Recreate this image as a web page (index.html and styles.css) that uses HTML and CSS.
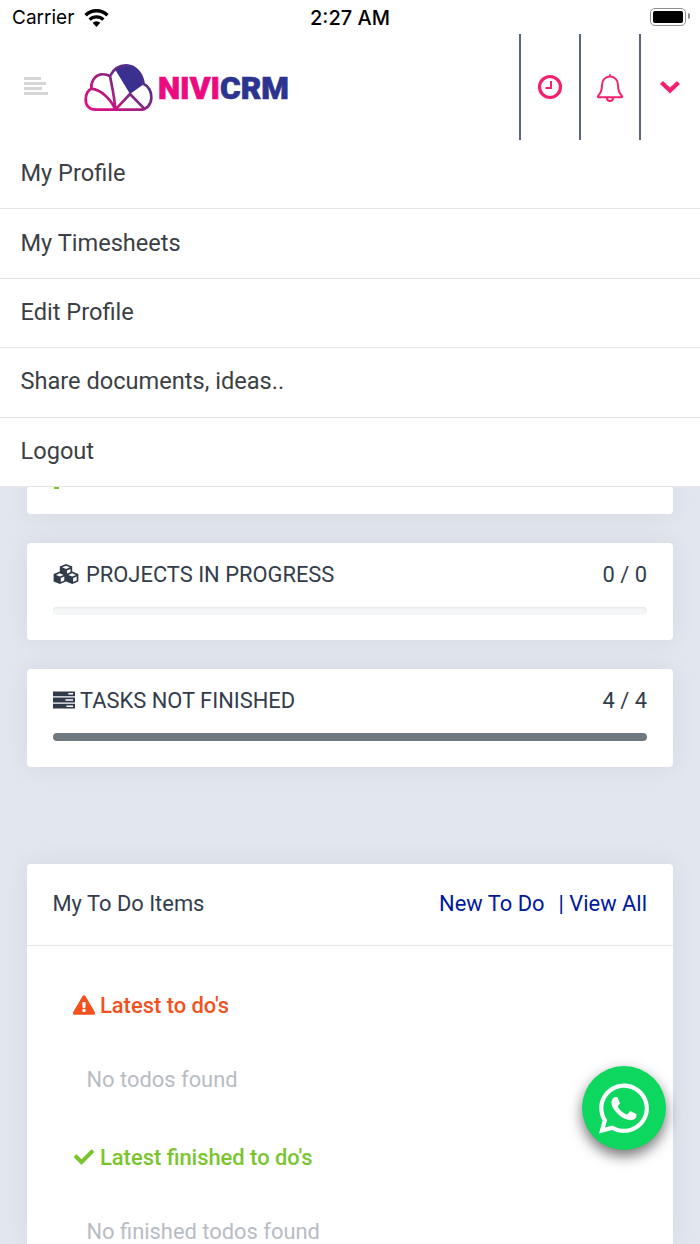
FILE: index.html
```html
<!DOCTYPE html>
<html lang="en">
<head>
  <meta charset="UTF-8" />
  <meta name="viewport" content="width=device-width, initial-scale=1.0"/>
  <title>NiviCRM Dashboard</title>
  <link rel="stylesheet" href="styles.css">
</head>
<body>
  <div class="status-bar">
    <div class="status-left">
      <span>Carrier</span>
      <svg class="wifi" viewBox="0 0 24 18" width="25" height="19" fill="none" stroke="#000">
        <path d="M1.500 6.800a15 15 0 0 1 21 0" stroke-width="3.200"/>
        <path d="M5.400 11a9.500 9.500 0 0 1 13.200 0" stroke-width="3.200"/>
        <path d="M12 18 8.300 14.100a5.300 5.300 0 0 1 7.400 0z" fill="#000" stroke="none"/>
      </svg>
    </div>
    <div class="status-time">2:27 AM</div>
    <div class="status-right">
      <div class="battery"><div class="battery-fill"></div></div>
    </div>
  </div>

  <header class="top-bar">
    <div class="burger"><span></span><span></span><span></span><span></span></div>
    <div class="logo">
      <svg viewBox="0 0 240 168" width="80" height="56">
        <defs>
          <linearGradient id="cloudGrad" x1="0" y1="1" x2="1" y2="0.2">
            <stop offset="0" stop-color="#ec0a80"/>
            <stop offset="0.5" stop-color="#a3207f"/>
            <stop offset="1" stop-color="#2c348f"/>
          </linearGradient>
        </defs>
        <path d="M105 28C118 18 135 14 150 19C172 26 186 46 192 72L150 102Z" fill="#39308f"/>
        <path d="M47 149C27 149 16 135 17 117C18 102 23 91 34 86C32 66 44 46 63 43C72 42 82 44 90 48C100 28 118 16 138 16C167 16 187 42 191 72C206 78 215 96 214 114C213 135 200 149 180 149Z" fill="none" stroke="url(#cloudGrad)" stroke-width="8"/>
        <path d="M34 86C63 90 92 115 106 149M90 48C96 80 104 115 106 149M106 149 150 102 192 145" fill="none" stroke="url(#cloudGrad)" stroke-width="8"/>
      </svg>
      <span class="logo-text"><span class="logo-pink">NIVI</span><span class="logo-blue">CRM</span></span>
    </div>
    <div class="top-actions">
      <div class="action-cell">
        <svg viewBox="0 0 26 26" width="26" height="26" fill="none" stroke="#f5206f">
          <circle cx="13" cy="13" r="10.500" stroke-width="3.200"/>
          <path d="M14 7v7H8.500" stroke-width="2"/>
        </svg>
      </div>
      <div class="action-cell">
        <svg viewBox="0 0 28 30" width="28" height="30" fill="none" stroke="#f5206f" stroke-width="2">
          <path d="M2 24c3-3 4-6 4-11 0-5 3.500-8.500 8-8.500s8 3.500 8 8.500c0 5 1 8 4 11 .5.700 0 1.200-.6 1.200H2.600C2 25.200 1.500 24.700 2 24z"/>
          <path d="M11 26c0 2 1.400 3 3 3s3-1 3-3"/>
          <circle cx="14" cy="3" r="1" fill="#f5206f" stroke="none"/>
        </svg>
      </div>
      <div class="action-cell">
        <svg viewBox="0 0 22 16" width="22" height="16" fill="none" stroke="#f5206f" stroke-width="4.400">
          <path d="M2.500 3.500 11 11.500l8.500-8"/>
        </svg>
      </div>
    </div>
  </header>

  <nav class="user-menu">
    <a href="#">My Profile</a>
    <a href="#">My Timesheets</a>
    <a href="#">Edit Profile</a>
    <a href="#">Share documents, ideas..</a>
    <a href="#">Logout</a>
  </nav>

  <main class="dashboard">
    <section class="card card-cut"><span class="green-tip"></span></section>

    <section class="card stat-card">
      <div class="stat-row">
        <div class="stat-title">
          <svg class="cubes" viewBox="0 0 27 21" width="26" height="20">
            <defs>
              <g id="cube">
                <path fill="#2f3a4a" d="M7 0l6.500 2.600v7.800L7 13 .5 10.400V2.600z"/>
                <path fill="#fff" d="M7 1.800l4 1.700-4 1.700-4-1.700zM8 6.700l3.700-1.500v4.100L8 10.800z"/>
              </g>
            </defs>
            <use href="#cube" x="6.500" y="0"/>
            <use href="#cube" x="0" y="8"/>
            <use href="#cube" x="13" y="8"/>
          </svg>
          <span>PROJECTS IN PROGRESS</span>
        </div>
        <span class="stat-count">0 / 0</span>
      </div>
      <div class="progress"></div>
    </section>

    <section class="card stat-card">
      <div class="stat-row">
        <div class="stat-title">
          <svg class="tasks-icon" viewBox="0 0 23 18" width="22" height="18">
            <path fill="#2f3a4a" d="M0 0h23v5H0zM0 6.500h23v5H0zM0 13h23v5H0z"/>
            <path fill="#fff" d="M16 1.800h5v1.400h-5zM13 8.300h8v1.400h-8zM14 14.800h7v1.400h-7z"/>
          </svg>
          <span>TASKS NOT FINISHED</span>
        </div>
        <span class="stat-count">4 / 4</span>
      </div>
      <div class="progress progress-full"></div>
    </section>

    <section class="card todo-card">
      <div class="todo-head">
        <span class="todo-name">My To Do Items</span>
        <div class="todo-links">
          <a href="#">New To Do</a>
          <a href="#">| View All</a>
        </div>
      </div>
      <div class="todo-body">
        <h4 class="todo-title todo-late">
          <svg viewBox="0 0 576 512" width="22" height="20"><path fill="#f4511e" d="M569.517 440.013C587.975 472.007 564.806 512 527.94 512H48.054c-36.937 0-59.999-40.055-41.577-71.987L246.423 23.985c18.467-32.009 64.72-31.951 83.154 0l239.94 416.028zM288 354c-25.405 0-46 20.595-46 46s20.595 46 46 46 46-20.595 46-46-20.595-46-46-46zm-43.673-165.346l7.418 136c.347 6.364 5.609 11.346 11.982 11.346h48.546c6.373 0 11.635-4.982 11.982-11.346l7.418-136c.375-6.874-5.098-12.654-11.982-12.654h-63.383c-6.884 0-12.356 5.78-11.981 12.654z"/></svg>
          Latest to do's
        </h4>
        <p class="todo-empty">No todos found</p>
        <h4 class="todo-title todo-done">
          <svg viewBox="0 0 512 512" width="22" height="20"><path fill="#7ac52e" d="M173.898 439.404l-166.4-166.4c-9.997-9.997-9.997-26.206 0-36.204l36.203-36.204c9.997-9.998 26.207-9.998 36.204 0L192 312.69 432.095 72.596c9.997-9.997 26.207-9.997 36.204 0l36.203 36.204c9.997 9.997 9.997 26.206 0 36.204l-294.4 294.401c-9.998 9.997-26.207 9.997-36.204-.001z"/></svg>
          Latest finished to do's
        </h4>
        <p class="todo-empty">No finished todos found</p>
      </div>
    </section>
  </main>

  <a class="whatsapp" href="#">
    <svg viewBox="0 0 448 512" width="50" height="57"><path fill="#fff" d="M380.9 97.1C339 55.1 283.2 32 223.9 32c-122.4 0-222 99.6-222 222 0 39.1 10.2 77.3 29.6 111L0 480l117.7-30.9c32.4 17.7 68.9 27 106.1 27h.1c122.3 0 224.1-99.6 224.1-222 0-59.3-25.2-115-67.1-157zm-157 341.6c-33.2 0-65.7-8.9-94-25.7l-6.7-4-69.8 18.3L72 359.2l-4.4-7c-18.5-29.4-28.2-63.3-28.2-98.2 0-101.7 82.8-184.5 184.6-184.5 49.3 0 95.6 19.2 130.4 54.1 34.8 34.9 56.2 81.2 56.1 130.5 0 101.8-84.9 184.6-186.6 184.6zm101.2-138.2c-5.5-2.8-32.8-16.2-37.9-18-5.1-1.9-8.8-2.8-12.5 2.8-3.7 5.6-14.3 18-17.6 21.8-3.2 3.7-6.5 4.2-12 1.4-32.6-16.3-54-29.1-75.5-66-5.7-9.8 5.7-9.1 16.3-30.3 1.8-3.7.9-6.9-.5-9.7-1.4-2.8-12.5-30.1-17.1-41.2-4.5-10.8-9.1-9.3-12.5-9.5-3.2-.2-6.9-.2-10.6-.2-3.7 0-9.7 1.4-14.8 6.9-5.1 5.6-19.4 19-19.4 46.3 0 27.3 19.9 53.7 22.6 57.4 2.8 3.7 39.1 59.7 94.8 83.8 35.2 15.2 49 16.5 66.6 13.9 10.7-1.6 32.8-13.4 37.4-26.4 4.6-13 4.6-24.1 3.2-26.4-1.3-2.5-5-3.9-10.5-6.6z"/></svg>
  </a>
</body>
</html>
```

FILE: styles.css
```css
html, body {
  height: 1244px;
  overflow: hidden;
}

body {
  position: relative;
  margin: 0;
  font-family: 'Roboto', 'Liberation Sans', sans-serif;
  background: #e1e6ef;
  color: #2f3a4a;
}

/* status bar */
.status-bar {
  display: flex;
  align-items: center;
  height: 34px;
  padding: 1px 10px 0 12px;
  background: #ffffff;
  color: #000000;
  font-family: 'Inter', 'Liberation Sans', sans-serif;
  box-sizing: border-box;
}

.status-left {
  display: flex;
  flex: 1;
  align-items: center;
  gap: 10px;
  font-size: 19px;
}

.status-time {
  font-size: 20px;
  font-weight: 500;
  margin-left: 2px;
}

.status-right {
  display: flex;
  flex: 1;
  justify-content: flex-end;
  padding-right: 4px;
}

.battery {
  position: relative;
  width: 36px;
  height: 18px;
  padding: 2px;
  border: 1.5px solid #8e8e8e;
  border-radius: 5px;
  box-sizing: border-box;
  margin-top: -1px;
}

.battery::after {
  content: "";
  position: absolute;
  top: 4px;
  right: -5px;
  width: 2px;
  height: 6px;
  background: #8e8e8e;
  border-radius: 0 2px 2px 0;
}

.battery-fill {
  height: 100%;
  background: #000000;
  border-radius: 2px;
}

/* header */
.top-bar {
  display: flex;
  align-items: center;
  height: 106px;
  background: #ffffff;
  padding-left: 24px;
}

.burger {
  display: flex;
  flex-direction: column;
  gap: 2px;
  width: 24px;
  margin-top: -3px;
}

.burger span {
  display: block;
  height: 3px;
  background: #d6d6d6;
}

.burger span:nth-child(1) { width: 17px; }
.burger span:nth-child(2) { width: 22px; }
.burger span:nth-child(3) { width: 18px; }
.burger span:nth-child(4) { width: 24px; }

.logo {
  display: flex;
  align-items: center;
  margin-left: 32px;
  margin-top: 2px;
}

.logo-text {
  margin-left: -2px;
  font-size: 31.5px;
  font-weight: 900;
  -webkit-text-stroke: 0.7px currentColor;
}

.logo-pink { color: #ec0a80; }
.logo-blue { color: #2c348f; }

.top-actions {
  display: flex;
  height: 100%;
  margin-left: auto;
  margin-right: 1px;
}

.action-cell {
  display: flex;
  align-items: center;
  justify-content: center;
  width: 60px;
  border-left: 2px solid #5a6779;
  box-sizing: border-box;
}

/* dropdown */
.user-menu {
  display: flex;
  flex-direction: column;
  background: #ffffff;
  height: 346px;
  border-bottom: 1px solid #e6e6e6;
  position: relative;
  z-index: 1;
}

.user-menu a {
  display: flex;
  align-items: center;
  flex: 1;
  padding: 0 0 2px 20.5px;
  font-size: 23.6px;
  color: #3c3f44;
  text-decoration: none;
  border-bottom: 1px solid #e6e6e6;
}

.user-menu a:last-child {
  border-bottom: none;
}

/* cards, the page is cut off at the window edge */
.dashboard {
  display: flex;
  flex-direction: column;
  height: 758px;
  padding: 0 27px;
  margin-top: -1px;
  overflow: hidden;
}

.card {
  flex: none;
  background: #ffffff;
  border-radius: 4px;
  box-shadow: 0 0 24px rgba(50, 50, 40, 0.07);
}

.card-cut {
  height: 28px;
  margin-bottom: 29px;
  padding-left: 27px;
}

.green-tip {
  display: block;
  width: 5px;
  height: 3px;
  background: #7ac52e;
}

.stat-card {
  height: 97px;
  padding: 18px 26px 0;
  margin-bottom: 29px;
  box-sizing: border-box;
}

.stat-card + .stat-card {
  height: 98px;
  margin-bottom: 97px;
}

.stat-row {
  display: flex;
  justify-content: space-between;
  align-items: center;
  height: 26px;
  font-size: 21.9px;
  color: #333c4b;
}

.stat-title {
  display: flex;
  align-items: center;
  gap: 5px;
}

.cubes {
  margin-right: 2px;
}

.progress {
  height: 8px;
  margin-top: 20px;
  border-radius: 4px;
  background: #f5f6f8;
  box-shadow: inset 0 1px 2px rgba(0, 0, 0, 0.08);
}

.progress-full {
  background: #6f7982;
  box-shadow: none;
}

/* to do card */
.todo-card {
  flex: 1;
  min-height: 0;
  overflow: hidden;
  border-radius: 4px 4px 0 0;
}

.todo-head {
  display: flex;
  justify-content: space-between;
  align-items: center;
  height: 82px;
  padding: 0 26px 2px;
  font-size: 21.9px;
  color: #333c4b;
  border-bottom: 1px solid #e4e7ec;
  box-sizing: border-box;
}

.todo-name {
  margin-left: -0.5px;
}

.todo-links {
  display: flex;
  gap: 14px;
}

.todo-links a {
  color: #00189c;
  text-decoration: none;
}

.todo-body {
  padding: 45px 46px 0;
}

.todo-title {
  display: flex;
  align-items: center;
  gap: 5px;
  margin: 0;
  height: 28px;
  font-size: 21.9px;
  font-weight: 500;
}

.todo-late { color: #f4511e; }
.todo-done { color: #7ac52e; }

.todo-empty {
  margin: 47px 0 49px;
  padding-left: 13.5px;
  line-height: 28px;
  font-size: 21.9px;
  color: #b8bcc4;
}

/* floating button, sits over the card */
.whatsapp {
  position: absolute;
  left: 582px;
  top: 1066px;
  width: 84px;
  height: 84px;
  display: flex;
  align-items: center;
  justify-content: center;
  border-radius: 50%;
  background: #0ed760;
  box-shadow: 0 6px 14px rgba(0, 0, 0, 0.55);
}
```
